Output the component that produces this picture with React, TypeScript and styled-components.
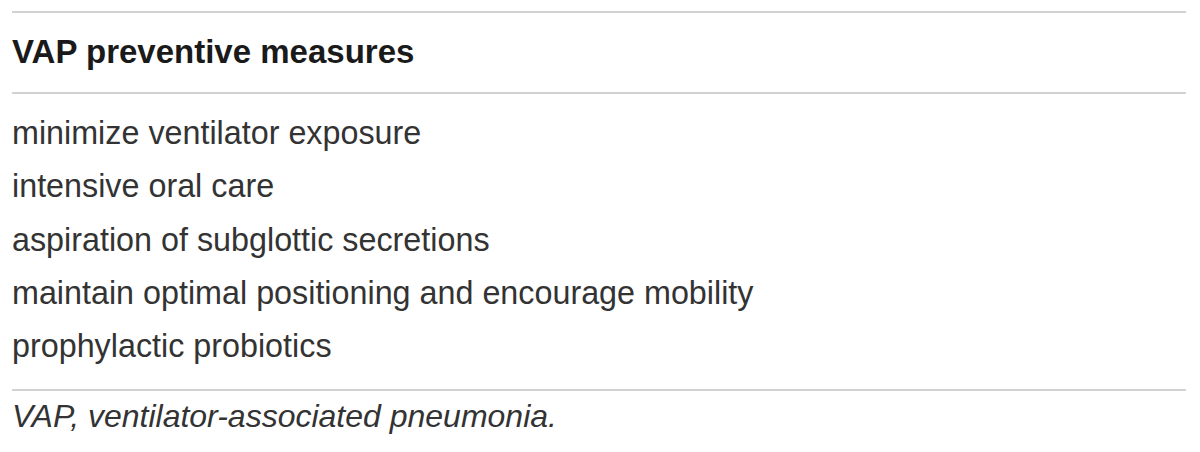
import React from "react";
import styled, { createGlobalStyle } from "styled-components";

const Global = createGlobalStyle`
  html, body { margin: 0; padding: 0; background: #ffffff; }
  body { font-family: "Liberation Sans", Arial, sans-serif; }
`;

const Table = styled.div`
  margin: 11px 14px 0 12px;
  display: flex;
  flex-direction: column;
`;

const Rule = styled.div`
  height: 2px;
  background: #d2d2d2;
`;

const Header = styled.div`
  padding: 12px 0 14px 0;
  font-size: 33px;
  line-height: 53px;
  font-weight: 700;
  color: #1a1a1a;
`;

const Body = styled.div`
  display: flex;
  flex-direction: column;
  padding: 13px 0 16px 0;
`;

const Row = styled.div`
  font-size: 32.3px;
  line-height: 53.25px;
  color: #333333;
`;

const Footnote = styled.div`
  font-size: 32px;
  line-height: 50px;
  font-style: italic;
  color: #333333;
`;

const items = [
  "minimize ventilator exposure",
  "intensive oral care",
  "aspiration of subglottic secretions",
  "maintain optimal positioning and encourage mobility",
  "prophylactic probiotics",
];

export default function App() {
  return (
    <>
      <Global />
      <Table>
        <Rule />
        <Header>VAP preventive measures</Header>
        <Rule />
        <Body>
          {items.map((t) => (
            <Row key={t}>{t}</Row>
          ))}
        </Body>
        <Rule />
        <Footnote>VAP, ventilator-associated pneumonia.</Footnote>
      </Table>
    </>
  );
}
